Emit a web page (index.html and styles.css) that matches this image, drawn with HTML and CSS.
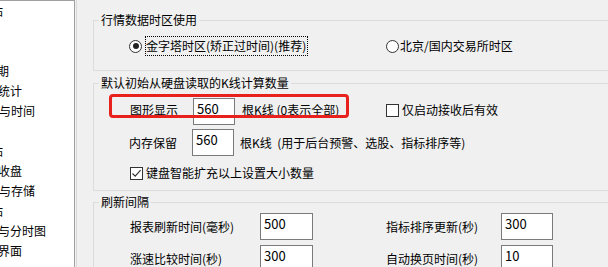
FILE: index.html
```html
<!DOCTYPE html>
<html lang="zh-CN">
<head>
<meta charset="utf-8">
<title>设置</title>
<link rel="stylesheet" href="styles.css">
</head>
<body>
<div class="app">
  <div class="tree">
    <div class="ti"><span class="o9">站</span></div>
    <div class="ti"></div>
    <div class="ti"></div>
    <div class="ti"><span class="o3">期</span></div>
    <div class="ti"><span class="o2">统计</span></div>
    <div class="ti"><span class="o1">与时间</span></div>
    <div class="ti"></div>
    <div class="ti"><span class="o9">站</span></div>
    <div class="ti"><span class="o2">收盘</span></div>
    <div class="ti"><span class="o1">与存储</span></div>
    <div class="ti"><span class="o9">站</span></div>
    <div class="ti"><span class="o2">与分时图</span></div>
    <div class="ti"><span class="o2">界面</span></div>
    <div class="ti"><span class="o9">站</span></div>
  </div>
  <div class="sep"></div>
  <div class="main">
    <fieldset class="grp g1">
      <legend>行情数据时区使用</legend>
      <div class="radio-row">
        <div class="opt opt1"><span class="radio on"></span><span class="focus">金字塔时区(矫正过时间)(推荐)</span></div>
        <div class="opt"><span class="radio"></span><span class="rlbl">北京/国内交易所时区</span></div>
      </div>
    </fieldset>

    <fieldset class="grp g2">
      <legend>默认初始从硬盘读取的K线计算数量</legend>
      <div class="row r1">
        <span class="lbl w63">图形显示</span>
        <span class="num w42">560</span>
        <span class="unit u1">根K线 (0表示全部)</span>
        <span class="chk"></span>
        <span class="clbl">仅启动接收后有效</span>
        <span class="mark"></span>
      </div>
      <div class="row r2">
        <span class="lbl w63">内存保留</span>
        <span class="num w42">560</span>
        <span class="unit u2">根K线&nbsp;&nbsp;(用于后台预警、选股、指标排序等)</span>
      </div>
      <div class="row r3">
        <span class="chk on"><svg width="11" height="11" viewBox="0 0 11 11"><path d="M1.5 5.5 L4.2 8.2 L9.6 2.2" fill="none" stroke="#333" stroke-width="1.2"/></svg></span>
        <span class="clbl">键盘智能扩充以上设置大小数量</span>
      </div>
    </fieldset>

    <fieldset class="grp g3">
      <legend>刷新间隔</legend>
      <div class="row r4">
        <span class="lbl w130">报表刷新时间(毫秒)</span>
        <span class="num w53">500</span>
        <span class="lbl w115 gap73">指标排序更新(秒)</span>
        <span class="num w52">300</span>
      </div>
      <div class="row r5">
        <span class="lbl w130">涨速比较时间(秒)</span>
        <span class="num w53">300</span>
        <span class="lbl w115 gap73">自动换页时间(秒)</span>
        <span class="num w52">10</span>
      </div>
    </fieldset>
  </div>
</div>
</body>
</html>
```

FILE: styles.css
```css
* { box-sizing: border-box; }

html, body {
  margin: 0;
  height: 267px;
  overflow: hidden;
}

body {
  background: #f0f0f0;
  font-family: "Noto Sans CJK SC", "Noto Sans", sans-serif;
  font-size: 12px;
  color: #000;
}

.app {
  display: flex;
  height: 267px;
}

/* left tree */
.tree {
  flex: none;
  width: 75px;
  height: 267px;
  background: #fff;
  border-top: 1px solid #a0a0a0;
  border-right: 1px solid #a0a0a0;
  overflow: hidden;
}

.ti {
  height: 20px;
  line-height: 19px;
  white-space: nowrap;
}

.o1 { margin-left: -1px; }
.o2 { margin-left: -2px; }
.o3 { margin-left: -3px; }
.o9 { margin-left: -9px; }

.sep {
  flex: none;
  width: 1px;
  margin-left: 1px;
  background: #dadada;
}

.main {
  flex: none;
  width: 620px;
  padding: 13px 0 0 16px;
}

/* group boxes */
.grp {
  margin: 0;
  padding: 0;
  width: 600px;
  min-width: 0;
  border: 1px solid #dcdcdc;
}

.grp legend {
  margin-left: 5px;
  padding: 0 2px;
  font-size: 12px;
  line-height: 14px;
}

.g1 { padding-bottom: 14px; }
.g2 { margin-top: 5px; padding-bottom: 9px; }
.g3 { margin-top: 4px; }

/* radios */
.radio-row {
  display: flex;
  align-items: center;
  height: 20px;
  margin-top: 9px;
  padding-left: 35px;
}

.opt {
  display: flex;
  align-items: center;
}

.opt1 { width: 257px; }

.radio {
  flex: none;
  width: 13px;
  height: 13px;
  border: 1px solid #333;
  border-radius: 50%;
  background: #fff;
  display: flex;
  align-items: center;
  justify-content: center;
}

.radio.on::after {
  content: "";
  width: 6px;
  height: 6px;
  border-radius: 50%;
  background: #222;
}

.focus {
  margin-left: 3px;
  padding: 0 1px 0 0;
  border: 1px dotted #000;
  line-height: 18px;
}

.rlbl {
  margin-left: 1px;
  line-height: 18px;
}

/* rows */
.row {
  display: flex;
  align-items: center;
  position: relative;
}

.r1 { margin-top: 8px; padding-left: 36px; }
.r2 { margin-top: 4px; padding-left: 35px; }
.r3 { margin-top: 9px; padding-left: 36px; height: 16px; }
.r4 { margin-top: 4px; padding-left: 36px; }
.r5 { margin-top: 5px; padding-left: 36px; }

.lbl {
  flex: none;
  line-height: 16px;
  white-space: nowrap;
}

.r1 .lbl { margin-bottom: 3px; }

.w63 { width: 63px; }
.w130 { width: 130px; }
.w115 { width: 115px; }
.gap73 { margin-left: 73px; }

.num {
  flex: none;
  height: 27px;
  background: #fff;
  border: 1px solid #7a7a7a;
  padding: 2px 0 0 3px;
  font-size: 13px;
  line-height: 16px;
}

.w42 { width: 42px; }
.w52 { width: 52px; }
.w53 { width: 53px; }

.unit {
  flex: none;
  line-height: 16px;
  white-space: nowrap;
}

.u1 { margin-left: 7px; width: 144px; margin-bottom: 3px; }
.u2 { margin-left: 6px; }

.chk {
  flex: none;
  width: 13px;
  height: 13px;
  border: 1px solid #333;
  background: #fff;
  display: flex;
  align-items: center;
  justify-content: center;
}

.r1 .chk { margin-bottom: 3px; }

.clbl {
  margin-left: 3px;
  line-height: 16px;
  white-space: nowrap;
}

.r1 .clbl { margin-bottom: 3px; }

/* red annotation frame over the first row */
.mark {
  position: absolute;
  left: 15px;
  top: -4px;
  width: 240px;
  height: 24px;
  border: 3px solid #e8211c;
  border-radius: 4px;
}
```
